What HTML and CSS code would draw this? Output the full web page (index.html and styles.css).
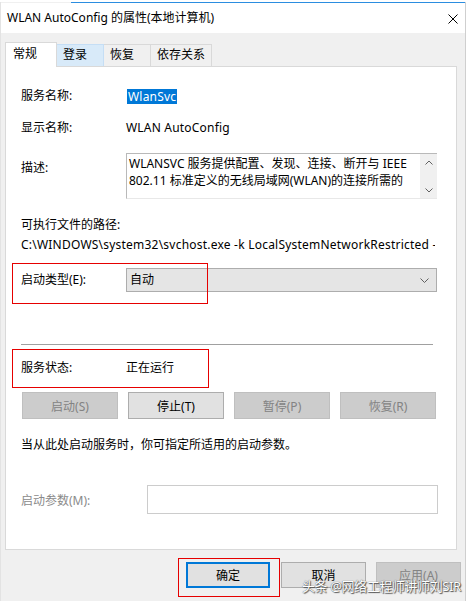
FILE: index.html
```html
<!DOCTYPE html>
<html lang="zh-CN">
<head>
  <meta charset="UTF-8" />
  <title>WLAN AutoConfig 的属性(本地计算机)</title>
  <link rel="stylesheet" href="styles.css">
</head>
<body>
  <div class="window">
    <div class="topline"></div>
    <div class="titlebar">
      <span>WLAN AutoConfig 的属性(本地计算机)</span>
      <svg class="close" width="10" height="10" viewBox="0 0 10 10">
        <path d="M0.5 0.5 L9.5 9.5 M9.5 0.5 L0.5 9.5" stroke="#000" stroke-width="1" fill="none"/>
      </svg>
    </div>

    <div class="dialog">
      <div class="tabs">
        <div class="tab active">常规</div>
        <div class="tab hover">登录</div>
        <div class="tab">恢复</div>
        <div class="tab">依存关系</div>
      </div>

      <div class="panel">
        <div class="row r-name">
          <span class="label">服务名称:</span>
          <span class="selected">WlanSvc</span>
        </div>
        <div class="row r-display">
          <span class="label">显示名称:</span>
          <span class="latin">WLAN AutoConfig</span>
        </div>
        <div class="desc-row">
          <span class="label desc-label">描述:</span>
          <div class="desc-box">
            <div class="desc-text">WLANSVC 服务提供配置、发现、连接、断开与 IEEE 802.11 标准定义的无线局域网(WLAN)的连接所需的</div>
            <div class="scroll">
              <svg width="8" height="5" viewBox="0 0 8 5"><path d="M0.5 4.5 L4 1 L7.5 4.5" stroke="#606060" fill="none"/></svg>
              <svg width="8" height="5" viewBox="0 0 8 5"><path d="M0.5 0.5 L4 4 L7.5 0.5" stroke="#606060" fill="none"/></svg>
            </div>
          </div>
        </div>
        <div class="row r-exe">可执行文件的路径:</div>
        <div class="row r-path">C:\WINDOWS\system32\svchost.exe -k LocalSystemNetworkRestricted -p</div>
        <div class="row r-start">
          <span class="label">启动类型(E):</span>
          <div class="select">
            <span>自动</span>
            <svg width="9" height="5" viewBox="0 0 9 5"><path d="M0.5 0.5 L4.5 4.5 L8.5 0.5" stroke="#606060" fill="none"/></svg>
          </div>
        </div>
        <div class="separator"></div>
        <div class="row r-status">
          <span class="label">服务状态:</span>
          <span>正在运行</span>
        </div>
        <div class="svc-buttons">
          <div class="btn disabled">启动(S)</div>
          <div class="btn">停止(T)</div>
          <div class="btn disabled">暂停(P)</div>
          <div class="btn disabled">恢复(R)</div>
        </div>
        <div class="row r-hint">当从此处启动服务时，你可指定所适用的启动参数。</div>
        <div class="param-row">
          <span class="param-label">启动参数(M):</span>
          <div class="param-input"></div>
        </div>
      </div>

      <div class="footer">
        <div class="btn fbtn default">确定</div>
        <div class="btn fbtn">取消</div>
        <div class="btn fbtn disabled">应用(A)</div>
      </div>
    </div>

    <div class="mark mark-start"></div>
    <div class="mark mark-status"></div>
    <div class="mark mark-ok"></div>
    <div class="watermark">头条 @网络工程师讲师刘SIR</div>
  </div>
</body>
</html>
```

FILE: styles.css
```css
body {
  margin: 0; background: #fff;
  font-family: "Noto Sans", "Noto Sans CJK SC", sans-serif; font-size: 12px; color: #000;
}
.window {
  position: relative; width: 464px; height: 599px;
  border-left: 1px solid #e3e3e3; border-right: 1px solid #cfcfcf; border-bottom: 1px solid #cfcfcf;
  background: #f0f0f0;
}
.topline { height: 1px; margin: 2px 0 0 70px; background: #2b8de0; }
.titlebar {
  height: 30px; background: #fff;
  display: flex; justify-content: space-between; align-items: center;
  padding: 0 7px 0 6px; line-height: 16px;
}
.close { margin-top: 1px; }

.dialog { padding: 9px 0 0 4px; }
.tabs { display: flex; align-items: flex-end; height: 24px; }
.tab {
  height: 21px; line-height: 20px; min-width: 34px; padding: 0 6px;
  border: 1px solid #d9d9d9; border-bottom: none; border-left: none; background: #f0f0f0;
}
.tab.active {
  width: 37px; height: 24px; padding: 0 6px 0 7px; line-height: 22px;
  border-left: 1px solid #d9d9d9; background: #fff; position: relative; z-index: 1; margin-bottom: -1px;
}
.tab.hover { background: #d8eaf9; border-color: #c5def5; }
.tab:last-child { min-width: 46px; }

.panel {
  width: 452px; height: 484px; border: 1px solid #d9d9d9; background: #fff;
  padding-left: 15px; box-sizing: border-box;
}
.row { display: flex; align-items: center; height: 16px; line-height: 16px; white-space: nowrap; }
.label { width: 105px; flex: none; }
.latin { letter-spacing: 0.2px; }
.selected { background: #0078d7; color: #fff; line-height: 15px; padding: 0 1px; margin-left: 1px; letter-spacing: 0.2px; }
.r-name { margin-top: 21px; }
.r-display { margin-top: 16px; }

.desc-row { display: flex; margin-top: 17px; }
.desc-label { margin-top: 7px; line-height: 16px; }
.desc-box {
  display: flex; width: 311px; height: 46px; box-sizing: border-box;
  border: 1px solid #b9b9b9; border-bottom-color: #e8e8e8; border-right: none;
}
.desc-text { flex: 1; padding: 1px 0 0 2px; line-height: 17px; overflow: hidden; }
.scroll {
  width: 17px; background: #f0f0f0; display: flex; flex-direction: column;
  justify-content: space-between; align-items: center; padding: 6px 0 5px;
}
.r-exe { margin-top: 18px; }
.r-path { margin-top: 4px; width: 414px; overflow: hidden; letter-spacing: 0.22px; }
.r-start { margin-top: 15px; height: 24px; }
.select {
  width: 311px; height: 24px; box-sizing: border-box; border: 1px solid #adadad; background: #e5e5e5;
  display: flex; justify-content: space-between; align-items: center; padding: 0 7px 0 3px;
}
.separator { width: 412px; height: 1px; background: #a0a0a0; margin-top: 52px; }
.r-status { margin-top: 15px; }

.svc-buttons { display: flex; gap: 10px; margin-top: 16px; margin-left: 1px; }
.btn {
  width: 96px; height: 27px; box-sizing: border-box; border: 1px solid #adadad; background: #e1e1e1;
  display: flex; align-items: center; justify-content: center;
}
.btn.disabled { background: #cccccc; border-color: #bfbfbf; color: #838383; }
.r-hint { margin-top: 18px; }

.param-row { display: flex; align-items: center; margin-top: 32px; }
.param-label { width: 126px; color: #8a8a8a; }
.param-input { width: 291px; height: 29px; box-sizing: border-box; border: 1px solid #cccccc; }

.footer { display: flex; justify-content: flex-end; gap: 10px; padding-right: 4px; margin-top: 12px; }
.fbtn { width: 85px; height: 26px; }
.fbtn.default { width: 84px; border: 2px solid #0078d7; margin-right: 1px; }

.mark { position: absolute; border: 1px solid #e60000; box-sizing: border-box; }
.mark-start { left: 11px; top: 261px; width: 196px; height: 41px; }
.mark-status { left: 11px; top: 347px; width: 197px; height: 39px; }
.mark-ok { left: 177px; top: 556px; width: 102px; height: 39px; }
.watermark {
  position: absolute; left: 301px; top: 577px; font-size: 13px; line-height: 15px; color: #fff;
  letter-spacing: -0.4px;
  text-shadow: 0 0 1px #333, 1px 1px 1px #555;
}
```
